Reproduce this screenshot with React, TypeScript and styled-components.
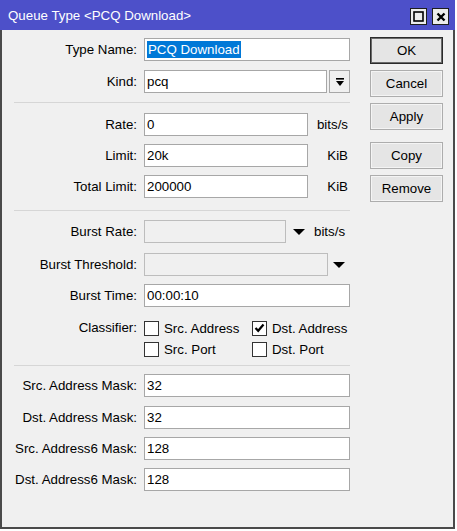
import React from 'react';
import styled, { createGlobalStyle } from 'styled-components';

const GlobalStyle = createGlobalStyle`
  body {
    margin: 0;
    background: #ffffff;
    font-family: "Liberation Sans", Arial, sans-serif;
    font-size: 13.3px;
    color: #000;
  }
`;

const Window = styled.div`
  width: 455px;
  height: 529px;
  display: flex;
  flex-direction: column;
`;

const TitleBar = styled.div`
  height: 30px;
  background: #4d50c9;
  color: #fff;
  display: flex;
  align-items: center;
  padding: 0 6px 0 8px;
  flex-shrink: 0;
`;

const Title = styled.div`
  flex: 1;
  padding-top: 1px;
`;

const TitleButtons = styled.div`
  display: flex;
  gap: 5px;
  padding-top: 3px;
`;

const TitleButton = styled.div`
  width: 15px;
  height: 15px;
  border: 1px solid #1e1e1e;
  background: #ececec;
  display: flex;
  align-items: center;
  justify-content: center;
`;

const Body = styled.div`
  flex: 1;
  background: #f0f0f0;
  border: 2px solid #4a4a4a;
  border-top: none;
  display: flex;
  gap: 20px;
  padding: 8px 0 0 12px;
`;

const Form = styled.div`
  width: 336px;
  display: flex;
  flex-direction: column;
`;

const Row = styled.div<{ $top?: number }>`
  display: grid;
  grid-template-columns: 123px 206px;
  column-gap: 7px;
  align-items: center;
  height: 23px;
  margin-top: ${(p) => p.$top ?? 0}px;
`;

const Label = styled.div`
  text-align: right;
  white-space: nowrap;
`;

const Field = styled.div`
  display: flex;
  align-items: center;
  height: 23px;
`;

const TextBox = styled.div<{ $width?: number; $disabled?: boolean }>`
  box-sizing: border-box;
  width: ${(p) => (p.$width ? `${p.$width}px` : '100%')};
  flex-shrink: 0;
  height: 23px;
  line-height: 21px;
  padding-left: 2px;
  border: 1px solid ${(p) => (p.$disabled ? '#bdbdbd' : '#a7a7a7')};
  background: ${(p) => (p.$disabled ? '#f0f0f0' : '#ffffff')};
  white-space: nowrap;
  overflow: hidden;
`;

const Selected = styled.span`
  background: #0078d7;
  color: #fff;
  padding: 1px 1px;
`;

const DropButton = styled.div`
  box-sizing: border-box;
  width: 21px;
  height: 23px;
  margin-left: 2px;
  border: 1px solid #a7a7a7;
  background: #f0f0f0;
  display: flex;
  align-items: center;
  justify-content: center;
`;

const Unit = styled.div<{ $align?: 'left' | 'right'; $gap?: number }>`
  flex: 1;
  text-align: ${(p) => p.$align ?? 'right'};
  padding-left: ${(p) => p.$gap ?? 0}px;
  padding-right: 2px;
  white-space: nowrap;
`;

const Arrow = styled.svg<{ $left: number }>`
  margin-left: ${(p) => p.$left}px;
  flex-shrink: 0;
`;

const Separator = styled.div<{ $top: number; $bottom: number }>`
  height: 1px;
  background: #d6d6d6;
  margin-top: ${(p) => p.$top}px;
  margin-bottom: ${(p) => p.$bottom}px;
`;

const ClassifierRow = styled.div`
  display: grid;
  grid-template-columns: 123px 206px;
  column-gap: 7px;
  margin-top: 14px;
`;

const ClassifierLabel = styled(Label)`
  line-height: 14px;
`;

const CheckGrid = styled.div`
  display: grid;
  grid-template-columns: 108px 98px;
  row-gap: 7px;
`;

const CheckItem = styled.div`
  display: flex;
  align-items: center;
  gap: 5px;
  height: 14px;
  white-space: nowrap;
`;

const CheckBox = styled.div`
  box-sizing: border-box;
  width: 15px;
  height: 15px;
  border: 1px solid #333;
  background: #fff;
  display: flex;
  align-items: center;
  justify-content: center;
  flex-shrink: 0;
`;

const Buttons = styled.div`
  width: 73px;
  display: flex;
  flex-direction: column;
  padding-top: -1px;
  margin-top: -1px;
  gap: 6px;
`;

const Button = styled.div<{ $default?: boolean; $top?: number }>`
  box-sizing: border-box;
  height: 27px;
  border: 1px solid ${(p) => (p.$default ? '#2b2b2b' : '#adadad')};
  box-shadow: inset 0 0 0 1px ${(p) => (p.$default ? '#6a6a6a' : '#f4f4f4')};
  background: #e5e5e5;
  display: flex;
  align-items: center;
  justify-content: center;
  margin-top: ${(p) => p.$top ?? 0}px;
`;

const DownTriangle: React.FC<{ left: number }> = ({ left }) => (
  <Arrow $left={left} width="12" height="6" viewBox="0 0 12 6">
    <polygon points="0,0 12,0 6,6" fill="#000" />
  </Arrow>
);

const Check: React.FC<{ checked?: boolean; label: string }> = ({ checked, label }) => (
  <CheckItem>
    <CheckBox>
      {checked && (
        <svg width="11" height="10" viewBox="0 0 11 10">
          <path d="M1.5 5 L4.2 7.8 L9.5 1.5" stroke="#000" strokeWidth="2.2" fill="none" />
        </svg>
      )}
    </CheckBox>
    <span>{label}</span>
  </CheckItem>
);

const masks = [
  { label: 'Src. Address Mask:', value: '32', top: 0 },
  { label: 'Dst. Address Mask:', value: '32', top: 9 },
  { label: 'Src. Address6 Mask:', value: '128', top: 8 },
  { label: 'Dst. Address6 Mask:', value: '128', top: 8 },
];

const App: React.FC = () => {
  return (
    <>
      <GlobalStyle />
      <Window>
        <TitleBar>
          <Title>Queue Type &lt;PCQ Download&gt;</Title>
          <TitleButtons>
            <TitleButton>
              <svg width="11" height="11" viewBox="0 0 11 11">
                <rect x="1" y="1" width="9" height="9" stroke="#000" strokeWidth="1.6" fill="none" />
              </svg>
            </TitleButton>
            <TitleButton>
              <svg width="10" height="10" viewBox="0 0 10 10">
                <path d="M1.5 1.5 L8.5 8.5 M8.5 1.5 L1.5 8.5" stroke="#000" strokeWidth="2.4" />
              </svg>
            </TitleButton>
          </TitleButtons>
        </TitleBar>
        <Body>
          <Form>
            <Row>
              <Label>Type Name:</Label>
              <TextBox>
                <Selected>PCQ Download</Selected>
              </TextBox>
            </Row>
            <Row $top={9}>
              <Label>Kind:</Label>
              <Field>
                <TextBox $width={183}>pcq</TextBox>
                <DropButton>
                  <svg width="8" height="8" viewBox="0 0 8 8">
                    <rect x="0" y="0" width="8" height="1.6" fill="#000" />
                    <polygon points="0,3 8,3 4,8" fill="#000" />
                  </svg>
                </DropButton>
              </Field>
            </Row>
            <Separator $top={9} $bottom={10} />
            <Row>
              <Label>Rate:</Label>
              <Field>
                <TextBox $width={164}>0</TextBox>
                <Unit>bits/s</Unit>
              </Field>
            </Row>
            <Row $top={8}>
              <Label>Limit:</Label>
              <Field>
                <TextBox $width={164}>20k</TextBox>
                <Unit>KiB</Unit>
              </Field>
            </Row>
            <Row $top={8}>
              <Label>Total Limit:</Label>
              <Field>
                <TextBox $width={164}>200000</TextBox>
                <Unit>KiB</Unit>
              </Field>
            </Row>
            <Separator $top={12} $bottom={9} />
            <Row>
              <Label>Burst Rate:</Label>
              <Field>
                <TextBox $width={142} $disabled />
                <DownTriangle left={7} />
                <Unit $align="left" $gap={9}>bits/s</Unit>
              </Field>
            </Row>
            <Row $top={10}>
              <Label>Burst Threshold:</Label>
              <Field>
                <TextBox $width={184} $disabled />
                <DownTriangle left={5} />
              </Field>
            </Row>
            <Row $top={8}>
              <Label>Burst Time:</Label>
              <TextBox>00:00:10</TextBox>
            </Row>
            <ClassifierRow>
              <ClassifierLabel>Classifier:</ClassifierLabel>
              <CheckGrid>
                <Check label="Src. Address" />
                <Check label="Dst. Address" checked />
                <Check label="Src. Port" />
                <Check label="Dst. Port" />
              </CheckGrid>
            </ClassifierRow>
            <Separator $top={9} $bottom={8} />
            {masks.map((m) => (
              <Row key={m.label} $top={m.top}>
                <Label>{m.label}</Label>
                <TextBox>{m.value}</TextBox>
              </Row>
            ))}
          </Form>
          <Buttons>
            <Button $default>OK</Button>
            <Button>Cancel</Button>
            <Button>Apply</Button>
            <Button $top={6}>Copy</Button>
            <Button>Remove</Button>
          </Buttons>
        </Body>
      </Window>
    </>
  );
};

export default App;
